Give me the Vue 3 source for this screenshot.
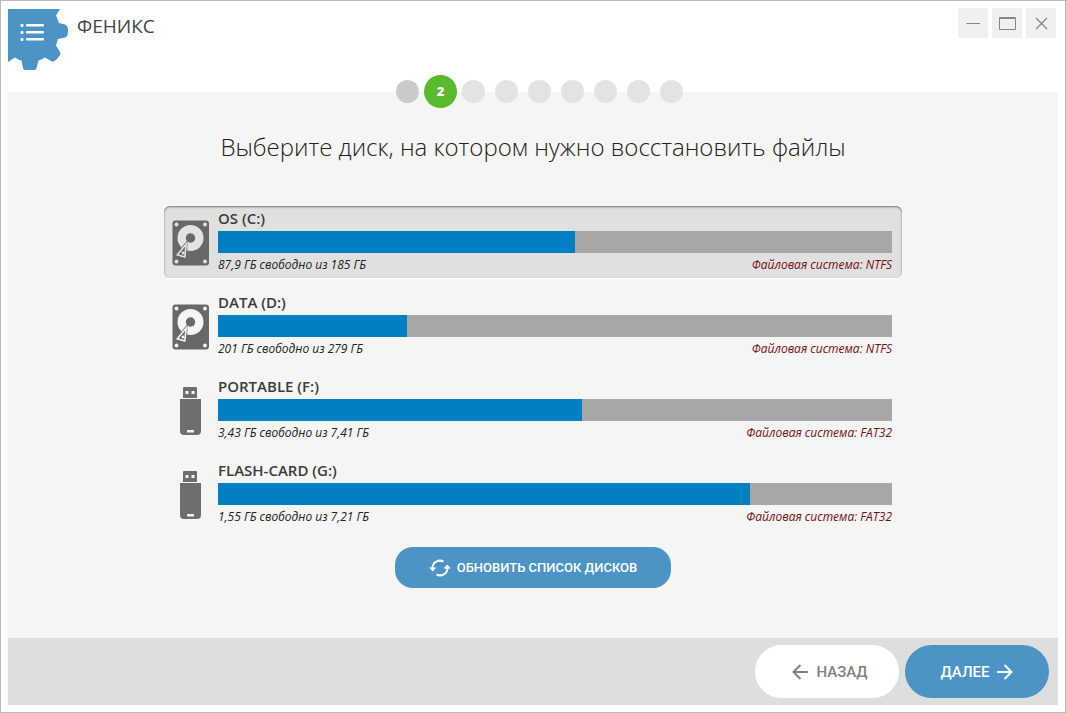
<script setup>
import { ref } from 'vue'

const disks = [
  { id: 'c', name: 'OS (C:)', type: 'hdd', free: '87,9 ГБ', total: '185 ГБ', fs: 'NTFS', used: 53 },
  { id: 'd', name: 'DATA (D:)', type: 'hdd', free: '201 ГБ', total: '279 ГБ', fs: 'NTFS', used: 28 },
  { id: 'f', name: 'PORTABLE (F:)', type: 'usb', free: '3,43 ГБ', total: '7,41 ГБ', fs: 'FAT32', used: 54 },
  { id: 'g', name: 'FLASH-CARD (G:)', type: 'usb', free: '1,55 ГБ', total: '7,21 ГБ', fs: 'FAT32', used: 79 },
]
const selected = ref('c')
const step = 2
</script>

<template>
  <div class="window">
    <header class="header">
      <button class="menu" type="button" aria-label="Меню">
        <svg width="60" height="62" viewBox="0 0 60 62">
          <path fill="#4c93c6" d="M0 0H52L48 6.500Q49.500 10 51 14L57 15.500Q59 16 59.500 18Q60.500 21.500 59.500 26Q59 28 57 28.500L50 30Q48.800 34 48 36.500L51.500 42Q53 44 52 46Q49.500 50 46.500 52Q45 53 43 52L37 48.500Q34 50.500 30.500 51.500L28.500 59Q28 61 26.500 61H17Q15.500 61 15 59L13.500 51.500Q10.500 51 7 48.500L0 53Z" />
          <g fill="#fff">
            <rect x="12.500" y="15" width="3" height="3" rx="1" />
            <rect x="12.500" y="22" width="3" height="3" rx="1" />
            <rect x="12.500" y="29" width="3" height="3" rx="1" />
            <rect x="18" y="15" width="18" height="2.500" rx="1" />
            <rect x="18" y="22" width="18" height="2.500" rx="1" />
            <rect x="18" y="29" width="18" height="2.500" rx="1" />
          </g>
        </svg>
      </button>
      <h1 class="brand">ФЕНИКС</h1>
      <div class="controls">
        <button type="button" aria-label="Свернуть">
          <svg width="30" height="30" viewBox="0 0 30 30"><path d="M8.500 15.500H22" /></svg>
        </button>
        <button type="button" aria-label="Развернуть">
          <svg width="30" height="30" viewBox="0 0 30 30"><path d="M7.500 9.500H23.500V21.500H7.500ZM7.500 10.500H23.500" /></svg>
        </button>
        <button type="button" aria-label="Закрыть">
          <svg width="30" height="30" viewBox="0 0 30 30"><path class="cross" d="M10 10L21 21M21 10L10 21" /></svg>
        </button>
      </div>
    </header>

    <main class="main">
      <ol class="steps">
        <li v-for="n in 9" :key="n">
          <span class="dot" :class="{ done: n < step, current: n === step }">{{ n === step ? n : '' }}</span>
        </li>
      </ol>

      <h2 class="title">Выберите диск, на котором нужно восстановить файлы</h2>

      <div class="disks" role="radiogroup" aria-label="Диски">
        <label v-for="d in disks" :key="d.id" class="disk" :class="{ selected: selected === d.id }">
          <input v-model="selected" class="radio" type="radio" name="disk" :value="d.id" />
          <span class="icon">
            <svg v-if="d.type === 'hdd'" width="38" height="46" viewBox="0 0 38 46">
              <rect x="0.500" y="0.500" width="36.500" height="45" rx="3" fill="#686868" />
              <g class="cut">
                <circle cx="4.500" cy="4.500" r="1.900" />
                <circle cx="33" cy="4.500" r="1.900" />
                <circle cx="4.500" cy="41.500" r="1.900" />
                <circle cx="33" cy="41.500" r="1.900" />
                <circle cx="18.500" cy="18" r="13" />
              </g>
              <circle cx="18.500" cy="18" r="4.700" fill="#686868" />
              <path d="M15.500 20L2.500 36L15 39.500Z" fill="#686868" />
              <path class="arm" d="M14.200 24L5.300 34.800L12.800 37Z" />
              <circle class="cut" cx="11" cy="33" r="1.400" />
            </svg>
            <svg v-else width="22" height="48" viewBox="0 0 22 48">
              <path fill="#6e6e6e" d="M4 0H16Q17 0 17 1V11H3V1Q3 0 4 0ZM0 12H21V44Q21 48 17 48H4Q0 48 0 44Z" />
              <g class="cut">
                <rect x="5.500" y="4" width="3" height="3" />
                <rect x="11.500" y="4" width="3" height="3" />
                <rect x="7" y="43" width="7" height="2.500" rx="0.500" />
              </g>
            </svg>
          </span>
          <span class="info">
            <span class="name">{{ d.name }}</span>
            <span class="bar"><span class="fill" :style="{ width: d.used + '%' }"></span></span>
            <span class="meta">
              <span>{{ d.free }} свободно из {{ d.total }}</span>
              <span class="fs">Файловая система: {{ d.fs }}</span>
            </span>
          </span>
        </label>
      </div>

      <button class="refresh" type="button">
        <svg width="22" height="18" viewBox="0 0 22 18">
          <g fill="none" stroke="#fff" stroke-width="2">
            <path d="M3.500 9A7.300 7.300 0 0 1 14.500 2.700" />
            <path d="M18.500 9A7.300 7.300 0 0 1 7.500 15.300" />
          </g>
          <path fill="#fff" d="M0 8.500H7.500L3.700 12.500ZM22 9.500H14.500L18.300 5.500Z" />
        </svg>
        <span>ОБНОВИТЬ СПИСОК ДИСКОВ</span>
      </button>
    </main>

    <footer class="footer">
      <button class="nav back" type="button">
        <svg width="16" height="16" viewBox="0 0 16 16"><path d="M16 8H1.500M8.500 1L1.500 8L8.500 15" /></svg>
        <span>НАЗАД</span>
      </button>
      <button class="nav next" type="button">
        <span>ДАЛЕЕ</span>
        <svg width="16" height="16" viewBox="0 0 16 16"><path d="M0 8H14.500M7.500 1L14.500 8L7.500 15" /></svg>
      </button>
    </footer>
  </div>
</template>

<style>
body {
  margin: 0;
  background: #fff;
}
</style>

<style scoped>
.window {
  box-sizing: border-box;
  min-height: 100vh;
  display: flex;
  flex-direction: column;
  padding: 7px;
  border: 1px solid #bababa;
  background: #fff;
  font-family: "Open Sans", "Noto Sans", sans-serif;
  color: #333;
}

button {
  border: 0;
  padding: 0;
  margin: 0;
  font-family: Roboto, sans-serif;
  cursor: pointer;
}

svg {
  display: block;
  flex: none;
}

.header {
  display: flex;
  align-items: flex-start;
  height: 84px;
}

.menu {
  margin-top: 1px;
  background: none;
}

.brand {
  flex: 1;
  margin: 4px 0 0 9px;
  font-size: 19px;
  line-height: 28px;
  font-weight: 400;
  color: #444;
}

.controls {
  display: flex;
  gap: 4px;
  padding-right: 2px;
}

.controls button {
  background: #f1f0ef;
}

.controls path {
  fill: none;
  stroke: #858585;
}

.controls .cross {
  stroke-width: 1.3;
}

.main {
  flex: 1;
  display: flex;
  flex-direction: column;
  align-items: center;
  background: #f5f5f3;
}

.steps {
  display: flex;
  list-style: none;
  margin: -18px 0 0;
  padding: 0 0 0 13px;
}

.steps li {
  width: 33px;
  height: 34px;
  display: flex;
  align-items: center;
  justify-content: center;
}

.dot {
  width: 23px;
  height: 23px;
  border-radius: 50%;
  background: #e3e3e2;
}

.dot.done {
  background: #cacaca;
}

.dot.current {
  width: 33px;
  height: 33px;
  background: #58bb2c;
  color: #fff;
  font-size: 13px;
  line-height: 32px;
  font-weight: 800;
  text-align: center;
}

.title {
  margin: 22px 0 0;
  font-size: 24px;
  line-height: 34px;
  font-weight: 300;
  color: #222;
  text-align: center;
}

.disks {
  width: 100%;
  max-width: 738px;
  margin-top: 42px;
  display: flex;
  flex-direction: column;
  gap: 12px;
}

.disk {
  position: relative;
  box-sizing: border-box;
  display: flex;
  min-height: 72px;
  padding-right: 10px;
  border-radius: 6px;
  cursor: pointer;
  --cut: #f5f5f3;
}

.disk.selected {
  background: #e0e0df;
  box-shadow: inset 0 1px 1px #8f8f8f, inset 0 1px 2px 1px #c0c0c0, 0 1px 0 #fff;
  --cut: #e2e2e2;
}

.radio {
  position: absolute;
  opacity: 0;
  pointer-events: none;
}

.icon {
  width: 54px;
  display: flex;
  align-items: center;
  justify-content: center;
  padding: 2px 1px 0 0;
  box-sizing: border-box;
}

.cut {
  fill: var(--cut);
}

.arm {
  fill: none;
  stroke: var(--cut);
  stroke-width: 1.6;
}

.info {
  flex: 1;
  display: flex;
  flex-direction: column;
}

.name {
  height: 25px;
  font-size: 15px;
  line-height: 24px;
  font-weight: 600;
  color: #3c3c3c;
}

.bar {
  height: 22px;
  background: #a7a7a7;
}

.fill {
  display: block;
  height: 100%;
  background: #0080c3;
}

.meta {
  display: flex;
  justify-content: space-between;
  font-size: 12px;
  line-height: 24px;
  font-style: italic;
  color: #222;
}

.fs {
  color: #780d10;
}

.refresh {
  display: flex;
  align-items: center;
  justify-content: center;
  gap: 6px;
  width: 276px;
  height: 41px;
  margin: 17px 0;
  border-radius: 18px;
  background: #4c93c6;
  color: #fff;
  font-size: 13px;
  font-weight: 500;
}

.footer {
  display: flex;
  align-items: center;
  justify-content: flex-end;
  gap: 6px;
  height: 67px;
  padding-right: 9px;
  background: #dededc;
}

.nav {
  display: flex;
  align-items: center;
  justify-content: center;
  gap: 8px;
  width: 144px;
  height: 53px;
  border-radius: 27px;
  font-size: 15px;
  font-weight: 500;
}

.nav path {
  fill: none;
  stroke: currentColor;
  stroke-width: 2;
}

.back {
  padding-left: 6px;
  background: #fff;
  color: #808080;
}

.next {
  background: #4c93c6;
  color: #fff;
}
</style>
